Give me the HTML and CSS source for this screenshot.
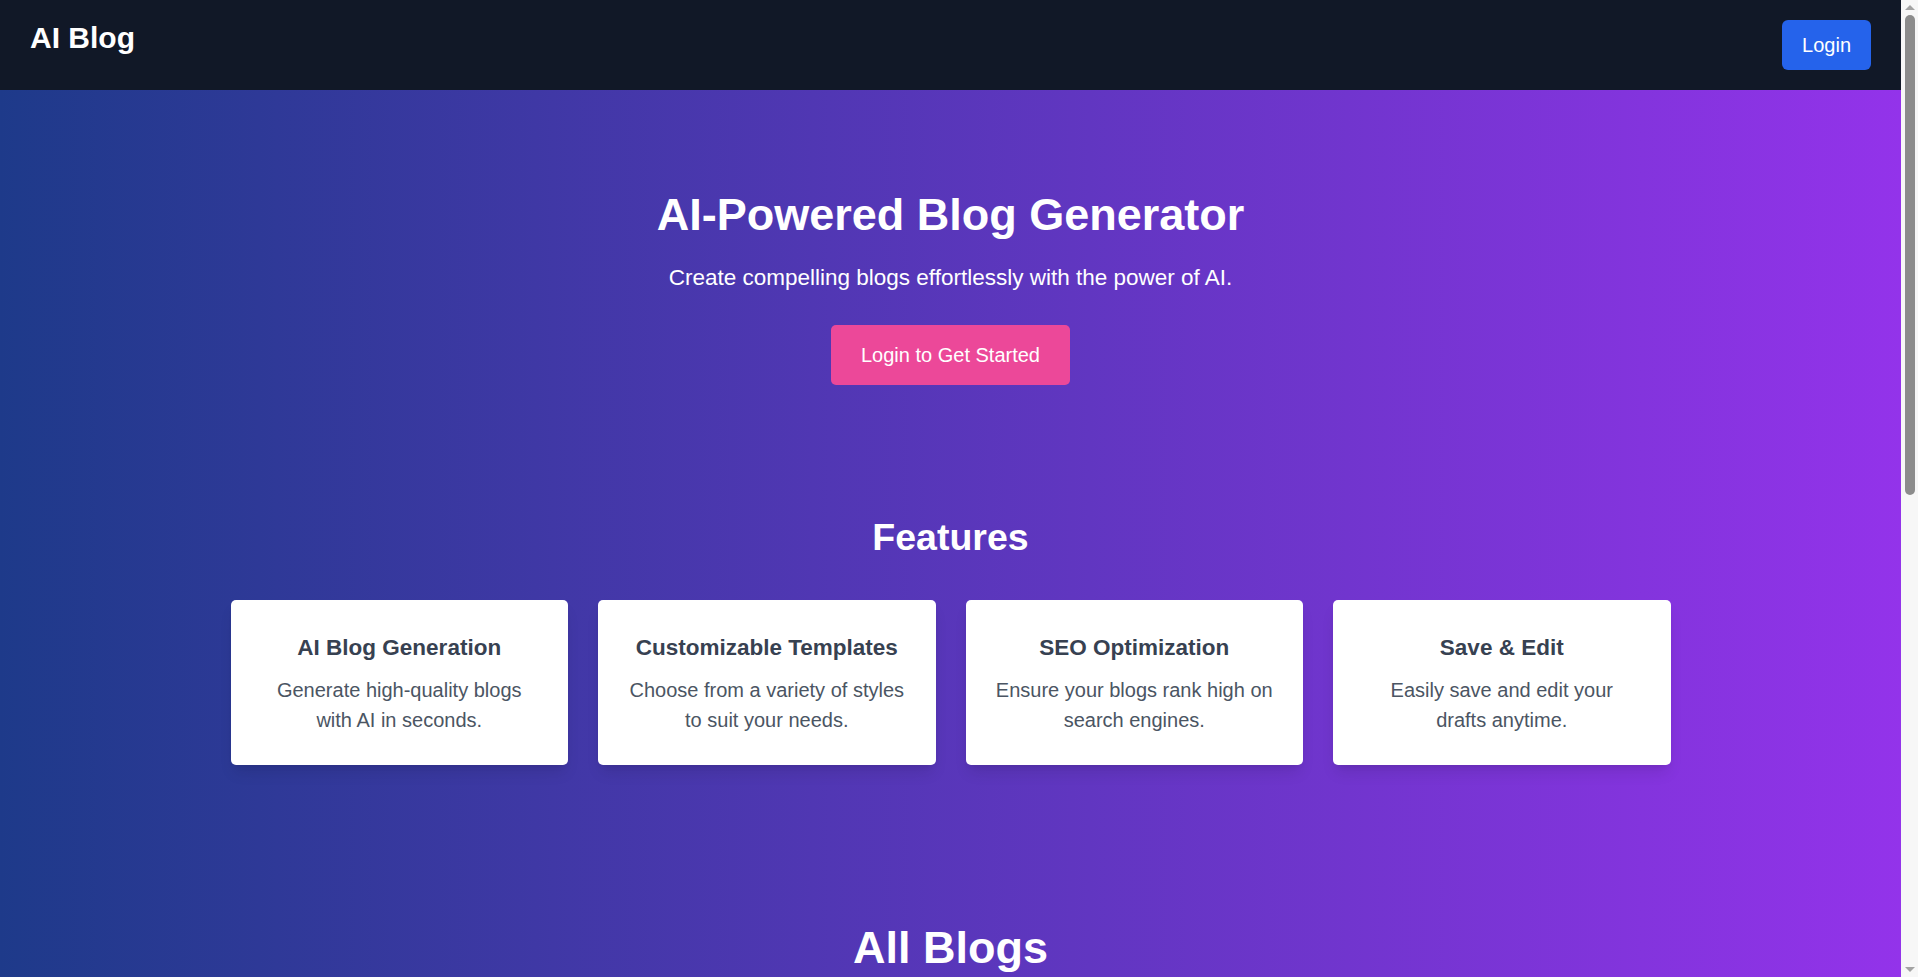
FILE: index.html
```html
<!DOCTYPE html>
<html lang="en">
<head>
<meta charset="utf-8">
<title>AI Blog</title>
<link rel="stylesheet" href="styles.css">
</head>
<body>
 <div class="page">
  <nav class="navbar">
    <div class="brand">AI Blog</div>
    <button class="nav-login">Login</button>
  </nav>
  <main class="main">
    <section class="hero">
      <h1 class="hero-title">AI-Powered Blog Generator</h1>
      <p class="hero-sub">Create compelling blogs effortlessly with the power of AI.</p>
      <button class="hero-cta">Login to Get Started</button>
    </section>
    <section class="features">
      <h2 class="section-title">Features</h2>
      <div class="feature-grid">
        <div class="feature-card">
          <h3 class="feature-title">AI Blog Generation</h3>
          <p class="feature-text">Generate high-quality blogs with AI in seconds.</p>
        </div>
        <div class="feature-card">
          <h3 class="feature-title">Customizable Templates</h3>
          <p class="feature-text">Choose from a variety of styles to suit your needs.</p>
        </div>
        <div class="feature-card">
          <h3 class="feature-title">SEO Optimization</h3>
          <p class="feature-text">Ensure your blogs rank high on search engines.</p>
        </div>
        <div class="feature-card">
          <h3 class="feature-title">Save &amp; Edit</h3>
          <p class="feature-text">Easily save and edit your drafts anytime.</p>
        </div>
      </div>
    </section>
    <section class="blogs">
      <h2 class="blogs-title">All Blogs</h2>
      <div class="blog-list"></div>
    </section>
  </main>
 </div>
 <div class="scrollbar" aria-hidden="true">
   <div class="sb-arrow"><span class="tri-up"></span></div>
   <div class="sb-thumb"></div>
   <div class="sb-rest"></div>
   <div class="sb-arrow"><span class="tri-down"></span></div>
 </div>
</body>
</html>
```
FILE: styles.css
```css
* { box-sizing: border-box; }
html, body { margin: 0; padding: 0; }
body {
  display: flex;
  align-items: flex-start;
  font-family: "Liberation Sans", Arial, sans-serif;
  color: #111827;
}
h1, h2, h3, p { margin: 0; }
button {
  font-family: inherit;
  border: none;
  cursor: pointer;
}

.page {
  flex: 1;
  min-width: 0;
}

/* classic browser scrollbar */
.scrollbar {
  position: sticky;
  top: 0;
  flex: 0 0 17px;
  width: 17px;
  height: 100vh;
  background: #f7f7f7;
  display: flex;
  flex-direction: column;
  align-items: center;
}
.sb-arrow {
  width: 17px;
  height: 15px;
  display: flex;
  align-items: center;
  justify-content: center;
}
.tri-up, .tri-down {
  width: 0;
  height: 0;
  border-left: 5px solid transparent;
  border-right: 5px solid transparent;
}
.tri-up { border-bottom: 5px solid #a3a3a3; }
.tri-down { border-top: 5px solid #a3a3a3; }
.sb-thumb {
  width: 10px;
  height: 480px;
  border-radius: 5px;
  background: #8c8c8c;
}
.sb-rest { flex: 1; }

.navbar {
  display: flex;
  justify-content: space-between;
  align-items: flex-start;
  padding: 20px 30px;
  background: #111827;
}
.brand {
  color: #ffffff;
  font-size: 30px;
  line-height: 36px;
  font-weight: 700;
}
.nav-login {
  background: #2563eb;
  color: #ffffff;
  font-size: 20px;
  line-height: 30px;
  padding: 10px 20px;
  border-radius: 6px;
}

.main {
  background: linear-gradient(to right, #1e3a8a, #9333ea);
  color: #ffffff;
}

.hero {
  display: flex;
  flex-direction: column;
  align-items: center;
  text-align: center;
  padding: 100px 24px 130px;
}
.hero-title {
  font-size: 45px;
  line-height: 50px;
  font-weight: 700;
}
.hero-sub {
  margin-top: 20px;
  font-size: 22.5px;
  line-height: 35px;
}
.hero-cta {
  margin-top: 30px;
  background: #ec4899;
  color: #ffffff;
  font-size: 20px;
  line-height: 30px;
  padding: 15px 30px;
  border-radius: 5px;
}

.features {
  padding: 0 24px 158px;
}
.section-title {
  text-align: center;
  font-size: 37.5px;
  line-height: 45px;
  font-weight: 700;
  margin-bottom: 40px;
}
.feature-grid {
  max-width: 1440px;
  margin: 0 auto;
  display: grid;
  grid-template-columns: repeat(4, 1fr);
  gap: 30px;
}
.feature-card {
  background: #ffffff;
  border-radius: 5px;
  padding: 30px;
  text-align: center;
  box-shadow: 0 10px 15px -3px rgba(0,0,0,0.1), 0 4px 6px -4px rgba(0,0,0,0.1);
}
.feature-title {
  font-size: 22.5px;
  line-height: 35px;
  font-weight: 700;
  color: #374151;
}
.feature-text {
  margin-top: 10px;
  font-size: 20px;
  line-height: 30px;
  color: #4b5563;
}

.blogs {
  padding: 0 24px 100px;
}
.blogs-title {
  text-align: center;
  font-size: 45px;
  line-height: 50px;
  font-weight: 700;
}
.blog-list {
  max-width: 1440px;
  margin: 40px auto 0;
  min-height: 812px;
}
```
